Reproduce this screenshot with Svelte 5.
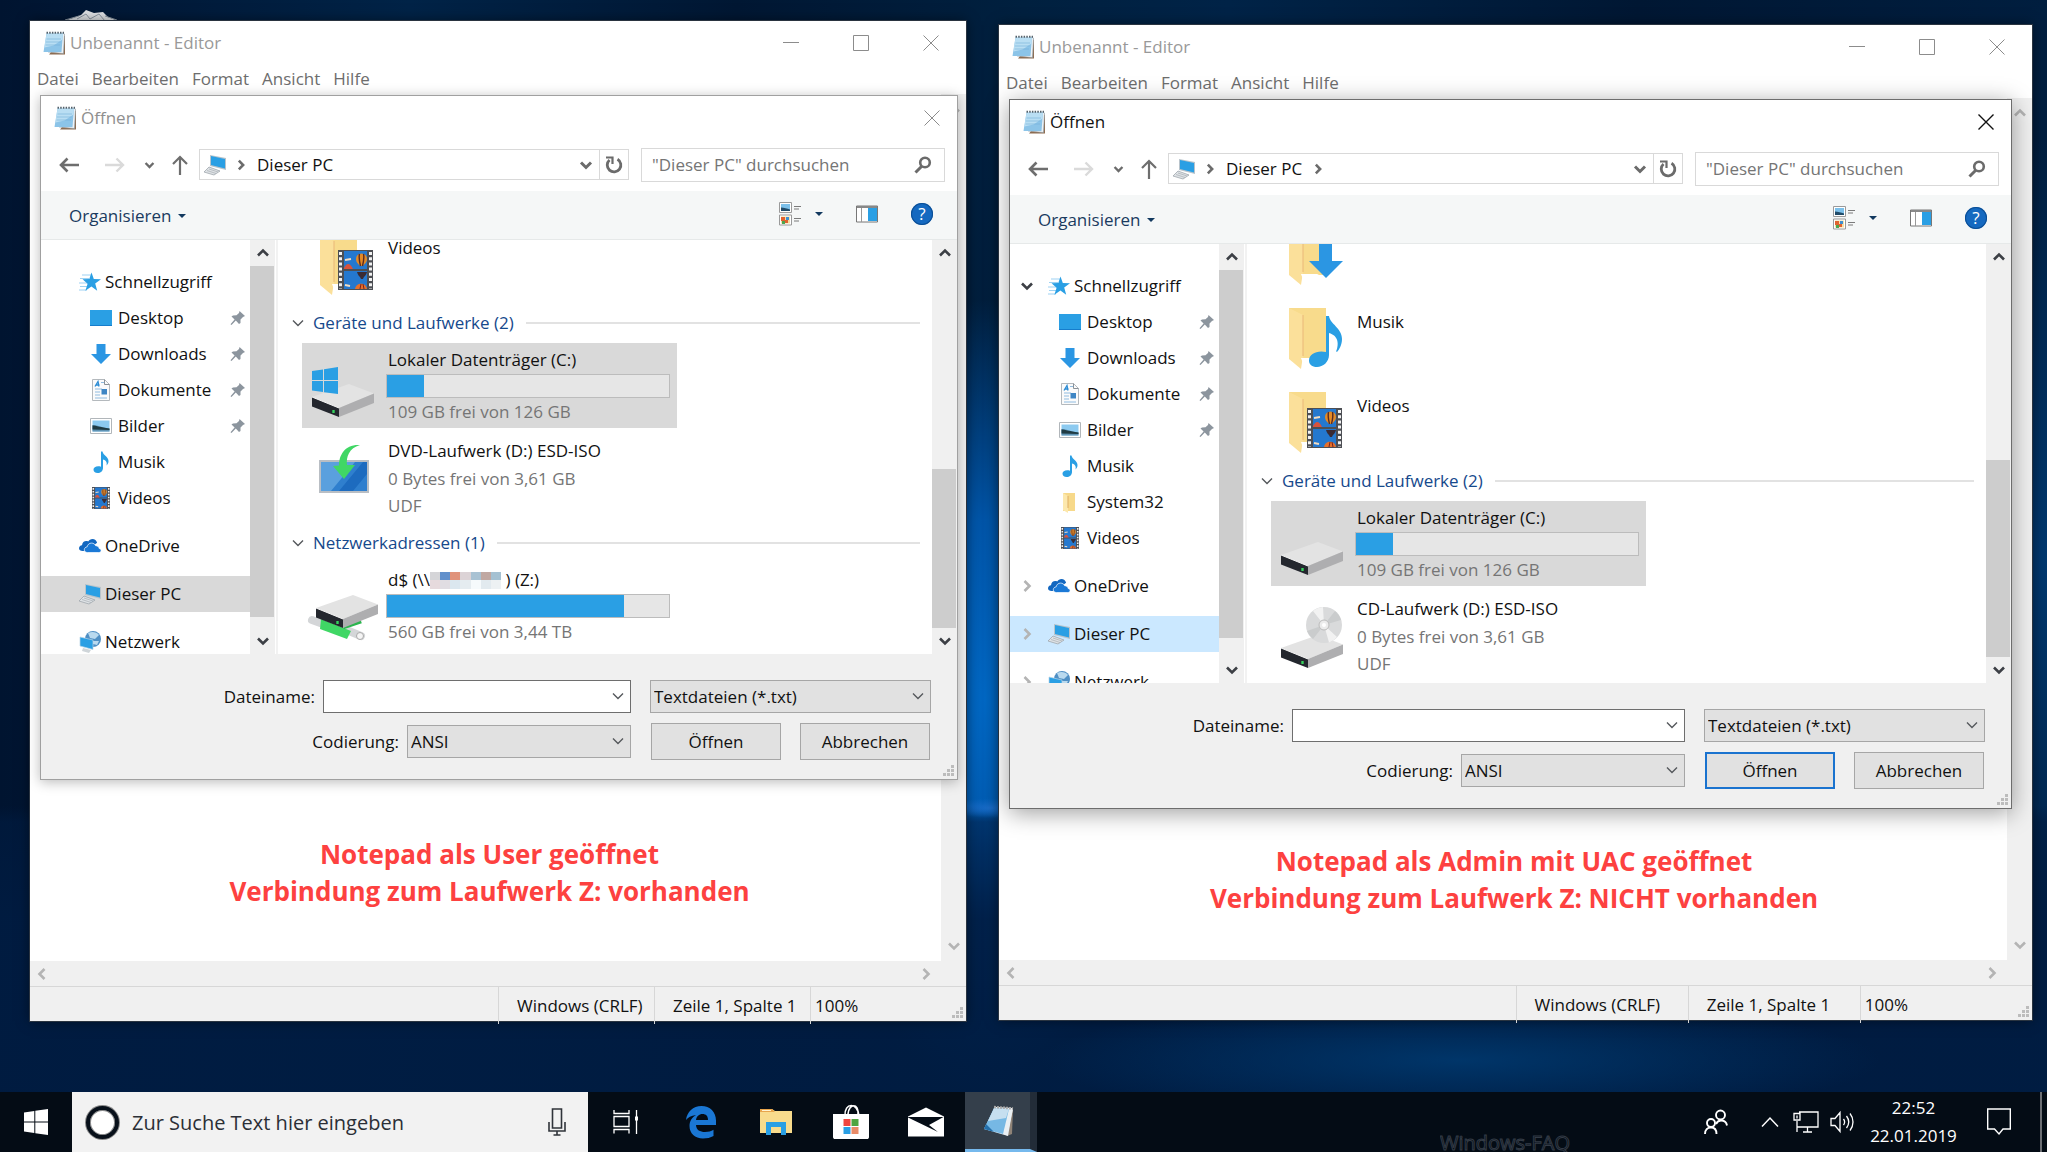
<script lang="ts">
	type NavItem = { label: string; icon: string; child?: boolean; pinned?: boolean; open?: boolean; selected?: boolean };
	type Tile = { label: string; icon: string; used?: number; lines?: string[]; selected?: boolean; masked?: boolean };
	type Group = { title?: string; kind: string; tiles: Tile[] };
	type Editor = {
		id: string;
		active: boolean;
		nav: NavItem[];
		groups: Group[];
		navThumb: number;
		listThumb: number;
		note: string[];
	};

	const pinnedItems: NavItem[] = [
		{ label: 'Schnellzugriff', icon: 'star', open: true },
		{ label: 'Desktop', icon: 'desktop', child: true, pinned: true },
		{ label: 'Downloads', icon: 'download', child: true, pinned: true },
		{ label: 'Dokumente', icon: 'document', child: true, pinned: true },
		{ label: 'Bilder', icon: 'picture', child: true, pinned: true },
		{ label: 'Musik', icon: 'music', child: true }
	];

	const rootItems: NavItem[] = [
		{ label: 'Videos', icon: 'video', child: true },
		{ label: 'OneDrive', icon: 'cloud' },
		{ label: 'Dieser PC', icon: 'pc', selected: true },
		{ label: 'Netzwerk', icon: 'network' }
	];

	const editors: Editor[] = [
		{
			id: 'user',
			active: false,
			nav: [...pinnedItems, ...rootItems],
			groups: [
				{ kind: 'folders', tiles: [{ label: 'Videos', icon: 'folder-video' }] },
				{
					title: 'Geräte und Laufwerke (2)',
					kind: 'drives',
					tiles: [
						{ label: 'Lokaler Datenträger (C:)', icon: 'drive-windows', used: 13, lines: ['109 GB frei von 126 GB'], selected: true },
						{ label: 'DVD-Laufwerk (D:) ESD-ISO', icon: 'dvd', lines: ['0 Bytes frei von 3,61 GB', 'UDF'] }
					]
				},
				{
					title: 'Netzwerkadressen (1)',
					kind: 'drives',
					tiles: [{ label: 'd$ (\\\\', icon: 'drive-network', used: 84, lines: ['560 GB frei von 3,44 TB'], masked: true }]
				}
			],
			navThumb: 97,
			listThumb: 44,
			note: ['Notepad als User geöffnet', 'Verbindung zum Laufwerk Z: vorhanden']
		},
		{
			id: 'admin',
			active: true,
			nav: [...pinnedItems, { label: 'System32', icon: 'folder', child: true }, ...rootItems],
			groups: [
				{
					kind: 'folders',
					tiles: [
						{ label: '', icon: 'folder-download' },
						{ label: 'Musik', icon: 'folder-music' },
						{ label: 'Videos', icon: 'folder-video' }
					]
				},
				{
					title: 'Geräte und Laufwerke (2)',
					kind: 'drives',
					tiles: [
						{ label: 'Lokaler Datenträger (C:)', icon: 'drive', used: 13, lines: ['109 GB frei von 126 GB'], selected: true },
						{ label: 'CD-Laufwerk (D:) ESD-ISO', icon: 'cd', lines: ['0 Bytes frei von 3,61 GB', 'UDF'] }
					]
				}
			],
			navThumb: 95,
			listThumb: 51,
			note: ['Notepad als Admin mit UAC geöffnet', 'Verbindung zum Laufwerk Z: NICHT vorhanden']
		}
	];

	const menus = ['Datei', 'Bearbeiten', 'Format', 'Ansicht', 'Hilfe'];
	const mosaic = [
		'#d5d5d8', '#6290cb', '#e0937b', '#dcd3d6', '#a9c2d3', '#c0a8a2', '#a5c1d2',
		'#e6dadd', '#e0dde2', '#dbe7ef', '#e5ecf0', '#f6fafc', '#e2eaef', '#edf1f3'
	];

	let search = $state('');
	let fileName = $state<Record<string, string>>({ user: '', admin: '' });
</script>

{#snippet chevron(dir: string, kind = 'bold')}
	<svg class="chevron {dir} {kind}" viewBox="0 0 14 14" aria-hidden="true"><path d="M2 4.500l5 5 5-5" /></svg>
{/snippet}

{#snippet notepad()}
	<svg class="notepad" viewBox="0 0 24 24" aria-hidden="true">
		<path d="M7 23.500h16V4z" fill="#8d6b4f" />
		<path d="M6 21l15.500 1.500 1-19.500L20 2z" fill="#eef2f5" stroke="#8c9aa5" stroke-width=".6" />
		<path d="M4.500 2.500H21l-1.500 18.500H1.500z" fill="#8cc4e8" />
		<path d="M4.500 2.500H21l-.5 6-9 6-9 2z" fill="#b9def3" />
		<path d="M4.500 1.800h17.500" stroke="#53616b" stroke-width="2" stroke-dasharray="1.500 1.200" />
		<path d="M4.500 8h14.500M4 11h14.500M3.500 14h14.500" stroke="#74b0d8" stroke-width=".6" />
	</svg>
{/snippet}

{#snippet film()}
	<path d="M0 0h35v40H0z" fill="#4d4f54" />
	<path d="M2.500 2v37M32.500 2v37" stroke="#f1f1f1" stroke-width="3" stroke-dasharray="3 2.200" />
	<path d="M6 1h23v18H6zM6 21h23v18H6z" fill="#2478cf" />
	<path d="M6 18c3-6 6-5 9 1H6z" fill="#d9533c" />
	<path d="M7 10l6-1M7 35l5 1" stroke="#f3dcc0" stroke-width="2" />
	<path d="M18 9a5.500 5.500 0 0111 0c0 4-3 5-4 7h-3c-1-2-4-3-4-7z" fill="#e38a26" />
	<path d="M21.500 4c-1 4 0 8 1 12M25.500 4c1 4 0 8-1 12" stroke="#5a2a20" stroke-width="1.400" fill="none" />
	<path d="M19 22h10c-1 4-3 4-4 7h-2c-1-3-3-3-4-7z" fill="#3a2b34" />
	<path d="M17 39c1-7 11-7 12 0z" fill="#e5702b" />
	<path d="M22 39l1-5M26 39l-1-5" stroke="#722" />
{/snippet}

{#snippet driveBox()}
	<path d="M1 13L38 0l25 9.500L28 24z" fill="#e3e3e3" />
	<path d="M28 24l35-14.500V19L28 33z" fill="#aeaeb0" />
	<path d="M1 13l27 11v9L1 22.500z" fill="#24272e" />
	<path d="M1 13l27 11" stroke="#f4f4f4" />
	<path d="M22.500 26v3" stroke="#36d25c" stroke-width="2.400" />
{/snippet}

{#snippet pcIcon()}
	<path d="M7 2l16 3v12L7 13z" fill="#b8c3cb" />
	<path d="M8 3l14 3v9.500L8 12z" fill="#2a9fe4" />
	<path d="M6 14l11 4-6 4-10-3z" fill="#dfe3e6" stroke="#9fa7ad" stroke-width=".8" />
	<path d="M4 17.500l9 3M6 16l9 3" stroke="#a8aeb3" stroke-width=".7" />
{/snippet}

{#snippet smallIcon(name: string)}
	<svg class="small-icon" viewBox="0 0 24 24" aria-hidden="true">
		{#if name === 'star'}
			<path d="M4 5h9M2 8.500h9M1 13h9M2 16.500h8M1 20h8" stroke="#9dd2f3" stroke-width="1.200" />
			<path d="M13.500 2.500l2.300 6.500 7.200.2-5.800 4.300 2 7.200-5.800-4.100-6 4.100 2.200-7L4.500 9.300l6.800-.2z" fill="#2a9fe4" />
		{:else if name === 'desktop'}
			<path d="M1 4h22v16H1z" fill="#2a9fe4" />
			<path d="M1 19.500h22" stroke="#167dcc" />
		{:else if name === 'download'}
			<path d="M7.500 2h9v10H22L12 22 2 12h5.500z" fill="#2b96e3" />
		{:else if name === 'document'}
			<path d="M3.500 1.500h12l5 5v16h-17z" fill="#fbfbfb" stroke="#b4b9bd" />
			<path d="M15.500 1.500v5h5" fill="none" stroke="#8b9298" />
			<path d="M6 8.500l3-5 1 5M6.500 7h4" stroke="#2a8bd4" fill="none" stroke-width="1.300" />
			<path d="M6 11h7M6 14h5M6 17h5M6 20h12M12 4.500h3" stroke="#8fbbe0" />
			<path d="M12.500 11h5.500v5.500h-5.500z" fill="#3f86c4" />
		{:else if name === 'picture'}
			<path d="M1.500 4.500h21v15h-21z" fill="#fff" stroke="#b1b6ba" />
			<path d="M3.500 6.500h17v11h-17z" fill="#8ccaf0" />
			<path d="M3.500 11c6 0 10 3 17 3.500v3h-17z" fill="#5f93b4" />
			<path d="M3.500 11.500c4 0 8 2 17 3v1.500l-17-.5z" fill="#1f3b43" />
		{:else if name === 'music'}
			<path d="M12 1.500h1.500c.5 4 6 5 6 9.500 0 2-.7 3.300-2 4.500 1-4-1.500-5.500-3.500-6v8.500c0 3-2.500 5-5.300 5-2.700 0-4.200-1.500-4.200-3.500C4.500 17 8 15.500 12 16.700z" fill="#2a9fe4" />
		{:else if name === 'video'}
			<svg x="3" y="1" width="18" height="22" viewBox="0 0 35 40" preserveAspectRatio="none">{@render film()}</svg>
		{:else if name === 'folder'}
			<path d="M5 3h12v18H5z" fill="#f7d98a" />
			<path d="M5 3l5 3v17l-5-3z" fill="#fce8ad" />
			<path d="M10 6v12" stroke="#dfae63" />
		{:else if name === 'cloud'}
			<path d="M4.500 17C2.500 17 1 16 1 14.200c0-1.600 1.200-2.800 3-3C4.300 8.500 6 7 8.300 7c.7 0 1.300.1 1.900.4C11.200 6 12.600 5 14.500 5c2.300 0 4 1.400 4.600 3.700L8 17z" fill="#1267c0" />
			<path d="M9.500 18.500c-2 0-3.200-1-3.200-2.700 0-1.600 1.200-2.800 2.900-3 .4-2.300 2.100-3.700 4.300-3.700 1.900 0 3.400 1 4.100 2.600 2.100 0 3.400 1.200 3.500 2.800 1.300.2 2 1 2 2 0 1.200-.9 2-2.300 2z" fill="#1b79d6" stroke="#fff" stroke-width=".7" />
		{:else if name === 'pc'}
			{@render pcIcon()}
		{:else if name === 'network'}
			<circle cx="15" cy="9" r="8" fill="#4f8fc4" />
			<path d="M10 3c4-2 9-1 11 2l-4 4-5-1zM15 11l6 0-2 4-4-1z" fill="#b9d9ee" />
			<path d="M2 7l13 3v9.500L2 16z" fill="#2a9fe4" stroke="#b8d4e6" stroke-width=".7" />
			<path d="M5 18l8 2-2 3-7-2z" fill="#cfd5d9" />
		{/if}
	</svg>
{/snippet}

{#snippet tileIcon(name: string)}
	{#if name.startsWith('folder')}
		<svg class="folder-icon" viewBox="0 0 54 62" aria-hidden="true">
			<path d="M0 0h37v51H12z" fill="#f8db8c" />
			<path d="M0 0l14 7v41l-2 13-12-10z" fill="#fbe09a" />
			<path d="M14 7v41" stroke="#e9b878" />
			<path d="M12 50h18l-15 8z" fill="#fff" />
			{#if name === 'folder-video'}
				<g transform="translate(18 16)">{@render film()}</g>
			{:else if name === 'folder-music'}
				<path d="M37 8h3c1 8 13 12 13 23 0 6-3 11-5 13-1 0-1-1 0-3 3-11-4-15-8-16v22c0 7-6 12-12 12-5 0-8-2.500-8-6.500 0-6.500 8-10.500 17-8.500z" fill="#2a9fe4" />
			{:else if name === 'folder-download'}
				<path d="M30 14h13v23h11L37 54 20 37h10z" fill="#2b96e3" />
			{/if}
		</svg>
	{:else}
		<svg class="drive-icon" viewBox="0 0 68 60" aria-hidden="true">
			{#if name === 'drive-windows'}
				<g transform="translate(0 20)">{@render driveBox()}</g>
				<path d="M1 7l11-1.500V16H1zM13 5.300L27 3v13H13zM1 17h11v11L1 26.500zM13 17h14v13l-14-1.800z" fill="#2a9fe4" />
			{:else if name === 'drive'}
				<g transform="translate(0 20)">{@render driveBox()}</g>
			{:else if name === 'cd'}
				<g transform="translate(0 22)">{@render driveBox()}</g>
				<circle cx="44" cy="12" r="18" fill="#d9dadb" />
				<path d="M44 12L33-2a18 18 0 0110-4zM44 12l13 12a18 18 0 01-8 5.500z" fill="#f2f2f2" />
				<path d="M44 12L27 18a18 18 0 006 8zM44 12l17-5a18 18 0 00-6-9z" fill="#cacccd" />
				<circle cx="44" cy="12" r="5" fill="#ececec" stroke="#bbb" />
				<circle cx="44" cy="12" r="2" fill="#fff" />
			{:else if name === 'dvd'}
				<path d="M8 5h50v33H8z" fill="#b9bec4" />
				<path d="M10 7h46v29H10z" fill="#2f7fce" />
				<path d="M10 7h34L20 36H10z" fill="#5aa0de" />
				<path d="M28 36L52 7h4v12L42 36z" fill="#1d6bbf" />
				<path d="M49-10C38-7 35 2 36 10h8L33 24 22 11l6-.5C28 0 34-11 49-10z" fill="#40d765" />
			{:else if name === 'drive-network'}
				<path d="M1 36l11 4M38 47l12 5" stroke="#d4d6d8" stroke-width="8" stroke-linecap="round" />
				<path d="M10 35l30 12-4 8-27-10z" fill="#40d765" />
				<path d="M32 43l18-6" stroke="#2bb54e" stroke-width="5" />
				<circle cx="49" cy="52" r="3.500" fill="#f5f5f5" stroke="#aaa" />
				<g transform="translate(4 11)">{@render driveBox()}</g>
			{/if}
		</svg>
	{/if}
{/snippet}

{#snippet scrollbar(size: number, atEnd: boolean)}
	<div class="scrollbar">
		<span class="scroll-step">{@render chevron('up')}</span>
		<div class="track" class:at-end={atEnd}>
			<div class="thumb" style="height: {size}%"></div>
		</div>
		<span class="scroll-step">{@render chevron('down')}</span>
	</div>
{/snippet}

{#snippet grip()}
	<svg class="grip" viewBox="0 0 12 12" aria-hidden="true">
		<path d="M8 0h3v3H8zM4 4h3v3H4zM8 4h3v3H8zM0 8h3v3H0zM4 8h3v3H4zM8 8h3v3H8z" fill="#bcbcbc" />
	</svg>
{/snippet}

{#snippet closeGlyph()}
	<svg class="caption-glyph" viewBox="0 0 16 16" aria-hidden="true"><path d="M.5.5l15 15M15.500.5l-15 15" /></svg>
{/snippet}

{#snippet openDialog(editor: Editor)}
	<section class="dialog" class:active={editor.active} aria-label="Öffnen">
		<header class="dialog-title">
			{@render notepad()}
			<h2>Öffnen</h2>
			<button class="caption-button" type="button" aria-label="Schließen">{@render closeGlyph()}</button>
		</header>

		<div class="address-row">
			<button class="step" type="button" aria-label="Zurück">
				<svg viewBox="0 0 20 16" aria-hidden="true"><path d="M8.500 1.500L2 8l6.500 6.500M2 8h18" stroke="#6e6e6e" stroke-width="2.600" fill="none" /></svg>
			</button>
			<button class="step" type="button" aria-label="Vorwärts" disabled>
				<svg viewBox="0 0 20 16" aria-hidden="true"><path d="M11.500 1.500L18 8l-6.500 6.500M18 8H0" stroke="#dadada" stroke-width="2.400" fill="none" /></svg>
			</button>
			<button class="step recent" type="button" aria-label="Zuletzt besuchte Orte">{@render chevron('down', 'gray tiny')}</button>
			<button class="step up-level" type="button" aria-label="Nach oben">
				<svg viewBox="0 0 16 20" aria-hidden="true"><path d="M1 9l7-7 7 7M8 2v18" stroke="#6e6e6e" stroke-width="2.200" fill="none" /></svg>
			</button>
			<div class="address">
				<svg class="small-icon" viewBox="0 0 24 24" aria-hidden="true">{@render pcIcon()}</svg>
				{@render chevron('right', 'gray small')}
				<a href="#pc">Dieser PC</a>
				{#if editor.active}{@render chevron('right', 'gray small')}{/if}
				<button class="history" type="button" aria-label="Vorherige Orte">{@render chevron('down', 'gray')}</button>
				<button class="refresh" type="button" aria-label="Aktualisieren">
					<svg viewBox="0 0 18 18" aria-hidden="true">
						<path d="M12.500 3.200A6.800 6.800 0 1 1 4.500 4" fill="none" stroke="#6b6b6b" stroke-width="2.800" />
						<path d="M1 1.500h6.500v6.500" fill="none" stroke="#6b6b6b" stroke-width="2.200" />
					</svg>
				</button>
			</div>
			<div class="search">
				<input type="search" bind:value={search} placeholder={'"Dieser PC" durchsuchen'} aria-label="Dieser PC durchsuchen" />
				<svg viewBox="0 0 18 18" aria-hidden="true">
					<circle cx="11" cy="6.500" r="4.800" fill="none" stroke="#6b6b6b" stroke-width="2.600" />
					<path d="M7.500 10.500L1.500 16.500" stroke="#6b6b6b" stroke-width="3" />
				</svg>
			</div>
		</div>

		<div class="toolbar">
			<button class="organize" type="button">Organisieren <i class="caret"></i></button>
			<button class="view-mode" type="button" aria-label="Ansicht ändern">
				<svg viewBox="0 0 22 24" aria-hidden="true">
					<path d="M.5.500h12v10H.5zM.5 13h12v10H.5z" fill="#fff" stroke="#9a9a9a" />
					<path d="M2 2h9v7H2z" fill="#7cc0ea" />
					<path d="M2 5.500c3 0 6 1 9 2V9H2z" fill="#214b68" />
					<path d="M2 14.500h9v7H2z" fill="#f4dfa5" />
					<path d="M2 15h4v4H2zM5 18h4v3H5z" fill="#e0622f" />
					<path d="M7 15h3v3H7z" fill="#3d8fd1" />
					<path d="M3 19h3v3H3z" fill="#4ca54e" />
					<path d="M15 4.500h7M15 7h5M15 16.500h7M15 19h5" stroke="#7b7b7b" />
				</svg>
				<i class="caret"></i>
			</button>
			<button type="button" aria-label="Vorschaufenster">
				<svg viewBox="0 0 22 18" aria-hidden="true">
					<path d="M.5 1h21v16H.5z" fill="#fff" stroke="#777" />
					<path d="M5.500 1v16" stroke="#999" />
					<path d="M12 3h9v13h-9z" fill="#2a9fe4" />
					<path d="M1 2h20" stroke="#888" stroke-width="2" />
				</svg>
			</button>
			<button class="help" type="button" aria-label="Hilfe">?</button>
		</div>

		<div class="panes">
			<nav class="tree" aria-label="Ordner">
				{#each editor.nav as item}
					<a href="#{item.label}" class="node" class:child={item.child} class:selected={item.selected}>
						<span class="expander">
							{#if editor.active && !item.child}
								{@render chevron(item.open ? 'down' : 'right', item.open ? '' : 'light')}
							{/if}
						</span>
						{@render smallIcon(item.icon)}
						<span>{item.label}</span>
						{#if item.pinned}
							<svg class="pin" viewBox="0 0 16 16" aria-hidden="true">
								<path d="M9.500 1l5.500 5-2 1-2.500 2.500L10.500 13 9 14 5.800 10.600 1.500 15l-1-.8L4.600 9.400 1.500 6.500 3 5.500l3.500-.3L9 3z" fill="#8c959e" />
							</svg>
						{/if}
					</a>
				{/each}
			</nav>
			{@render scrollbar(editor.navThumb, false)}
			<div class="splitter"></div>
			<div class="files">
				{#each editor.groups as group}
					{#if group.title}
						<h3>{@render chevron('down', 'thin')}<span>{group.title}</span></h3>
					{/if}
					<ul class={group.kind}>
						{#each group.tiles as tile}
							<li class="tile" class:selected={tile.selected}>
								<div class="tile-icon">{@render tileIcon(tile.icon)}</div>
								<div class="tile-text">
									<strong>
										{tile.label}{#if tile.masked}<span class="mosaic">{#each mosaic as color}<i style="background: {color}"></i>{/each}</span>{' ) (Z:)'}{/if}
									</strong>
									{#if tile.used}
										<div class="capacity"><div style="width: {tile.used}%"></div></div>
									{/if}
									{#each tile.lines ?? [] as line}
										<span>{line}</span>
									{/each}
								</div>
							</li>
						{/each}
					</ul>
				{/each}
			</div>
			{@render scrollbar(editor.listThumb, true)}
		</div>

		<form class="footer" onsubmit={(e) => e.preventDefault()}>
			<div class="fields">
				<div class="field name">
					<label for="{editor.id}-name">Dateiname:</label>
					<div class="box">
						<input id="{editor.id}-name" type="text" bind:value={fileName[editor.id]} />
						{@render chevron('down', 'thin')}
					</div>
				</div>
				<div class="field">
					<label for="{editor.id}-encoding">Codierung:</label>
					<div class="box encoding">
						<select id="{editor.id}-encoding"><option>ANSI</option><option>Unicode</option><option>UTF-8</option></select>
						{@render chevron('down', 'thin')}
					</div>
				</div>
			</div>
			<div class="actions">
				<div class="box">
					<select aria-label="Dateityp"><option>Textdateien (*.txt)</option><option>Alle Dateien</option></select>
					{@render chevron('down', 'thin')}
				</div>
				<div class="buttons">
					<button type="submit" class="primary">Öffnen</button>
					<button type="button">Abbrechen</button>
				</div>
			</div>
			{@render grip()}
		</form>
	</section>
{/snippet}

<div class="screen">
	<main class="desktop">
		<svg class="bin" viewBox="0 0 52 30" aria-hidden="true">
			<path d="M0 11L52 11 46 30H6z" fill="#8493a3" />
			<path d="M2 10l14-5 5-5 8 3 9-1 5 5 8 3v6H2z" fill="#dfe2e5" />
			<path d="M12 9l9-5 4 5 9-5 6 7M0 10l14-4M52 10l-12-4" stroke="#8d98a3" fill="none" />
		</svg>

		{#each editors as editor}
			<article class="window {editor.id}">
				<header class="window-title">
					{@render notepad()}
					<h1>Unbenannt - Editor</h1>
					<div class="captions">
						<button class="caption-button" type="button" aria-label="Minimieren">
							<svg class="caption-glyph" viewBox="0 0 16 16" aria-hidden="true"><path d="M0 7.500h16" /></svg>
						</button>
						<button class="caption-button" type="button" aria-label="Maximieren">
							<svg class="caption-glyph" viewBox="0 0 16 16" aria-hidden="true"><path d="M.5.5h15v15H.5z" /></svg>
						</button>
						<button class="caption-button" type="button" aria-label="Schließen">{@render closeGlyph()}</button>
					</div>
				</header>
				<nav class="menu" aria-label="Menü">
					{#each menus as menu}
						<button type="button">{menu}</button>
					{/each}
				</nav>
				<div class="editor">
					<div class="paper">
						{#each editor.note as line}
							<p>{line}</p>
						{/each}
					</div>
					<div class="edge vertical">{@render chevron('up', 'light')}{@render chevron('down', 'light')}</div>
					<div class="edge horizontal">{@render chevron('left', 'light')}{@render chevron('right', 'light')}</div>
					{@render openDialog(editor)}
				</div>
				<footer class="status">
					<span></span>
					<span>Windows (CRLF)</span>
					<span>Zeile 1, Spalte 1</span>
					<span>100%</span>
					{@render grip()}
				</footer>
			</article>
		{/each}
	</main>

	<footer class="taskbar">
		<button class="start" type="button" aria-label="Start">
			<svg viewBox="0 0 24 28" aria-hidden="true">
				<path d="M0 4.500L10.300 3v10.500H0zM11.300 2.800L24 1v12.500H11.300zM0 14.500h10.300V25L0 23.500zM11.300 14.500H24V27l-12.700-1.800z" fill="#fff" />
			</svg>
		</button>
		<div class="cortana">
			<i class="ring"></i>
			<input type="text" placeholder="Zur Suche Text hier eingeben" aria-label="Suche" />
			<svg viewBox="0 0 18 28" aria-hidden="true">
				<path d="M4.500 1h9v19h-9zM1 14v9h16v-9M9 23v4M5.500 27h7" fill="none" stroke="#30343a" stroke-width="1.600" />
			</svg>
		</div>
		<div class="apps">
			<button type="button" aria-label="Taskansicht">
				<svg viewBox="0 0 26 24" width="26" height="24" aria-hidden="true">
					<path d="M1 0v3.500h15V0M1 6.500h15v10H1zM1 23.500V19.500h15v4M23.500 0v24" fill="none" stroke="#fff" stroke-width="1.300" />
					<path d="M22 6.500h3v4h-3z" fill="#fff" />
				</svg>
			</button>
			<button type="button" aria-label="Microsoft Edge">
				<svg viewBox="0 0 32 34" width="32" height="34" aria-hidden="true">
					<path d="M1 15C2 7 8 1 16.500 1 25 1 31 7 31 15.500V20H11c.3 5 4 7 9 7 3.500 0 6-.8 8.500-2.200V31c-3 1.700-6.500 2.500-10.500 2.500-8 0-13.500-5-13.500-12.500 0-5 2.500-8.700 6.500-11C6 10.500 3 12.500 1 15zM11 15h12c0-4-2-6-5.500-6S11.500 11.500 11 15z" fill="#1a77d4" />
				</svg>
			</button>
			<button type="button" aria-label="Explorer">
				<svg viewBox="0 0 32 28" width="32" height="28" aria-hidden="true">
					<path d="M0 1h12l3 2h17v22H0z" fill="#f8db8c" />
					<path d="M0 1h12l3 3H0z" fill="#e8a54c" />
					<path d="M2 2.500h9" stroke="#fff3d0" />
					<path d="M6 14h20v13h-5v-8H11v8H6z" fill="#2a9fe4" />
				</svg>
			</button>
			<button type="button" aria-label="Microsoft Store">
				<svg viewBox="0 0 36 36" width="36" height="36" aria-hidden="true">
					<path d="M12 12c-1-14 13-14 14 0M15 10c1-11 11-11 10 0" fill="none" stroke="#fff" stroke-width="1.600" />
					<path d="M0 10h36v23c0 1.500-1 2-2 2H2c-1 0-2-.5-2-2z" fill="#fff" />
					<path d="M10.500 15h7v7h-7z" fill="#f0463f" />
					<path d="M18.500 15h7v7h-7z" fill="#4ea541" />
					<path d="M10.500 23h7v7h-7z" fill="#2a9fe4" />
					<path d="M18.500 23h7v7h-7z" fill="#e98b68" />
				</svg>
			</button>
			<button type="button" aria-label="Mail">
				<svg viewBox="0 0 36 30" width="36" height="30" aria-hidden="true">
					<path d="M0 9.500L18 .500l18 9v20H0z" fill="#fff" />
					<path d="M0 10h35.500L21 18l9 7L0 10.500z" fill="#040c16" />
				</svg>
			</button>
			<button class="running" type="button" aria-label="Editor">
				<svg viewBox="0 0 34 34" width="34" height="34" aria-hidden="true">
					<path d="M14 3l18 2-1 25-5 2z" fill="#8f8377" />
					<path d="M14 3l18 2-6 27z" fill="#d5dade" />
					<path d="M14 3l18 1-5 28L3 25z" fill="#e9eff3" />
					<path d="M13 4l15 1-6 25L3 25z" fill="#76b8e4" />
					<path d="M13 4l15 1-3 9-18 3z" fill="#c6dff0" />
					<path d="M5 20l8 8-10-3z" fill="#2470ab" />
					<path d="M13 3l19 1.500" stroke="#a9a9a9" stroke-width="2.500" stroke-dasharray="2 1" />
				</svg>
			</button>
		</div>
		<span class="brand">Windows-FAQ</span>
		<div class="tray">
			<button class="people" type="button" aria-label="Kontakte">
				<svg viewBox="0 0 24 26" width="24" height="26" aria-hidden="true">
					<path d="M1 25c0-4 2.500-6.500 6-6.500s5.500 2.500 5.500 6.500M12 15c1-2 2.500-3.500 5-3.500 3.500 0 5.500 2 6 5" fill="none" stroke="#fff" stroke-width="1.900" />
					<circle cx="7" cy="14" r="4" fill="none" stroke="#fff" stroke-width="1.900" />
					<circle cx="16.500" cy="6" r="4.500" fill="none" stroke="#fff" stroke-width="1.900" />
				</svg>
			</button>
			<button class="more" type="button" aria-label="Ausgeblendete Symbole">
				<svg viewBox="0 0 18 12" width="18" height="12" aria-hidden="true"><path d="M1 10.500l8-8.500 8 8.500" fill="none" stroke="#fff" stroke-width="1.500" /></svg>
			</button>
			<button type="button" aria-label="Netzwerk">
				<svg viewBox="0 0 26 22" width="26" height="22" aria-hidden="true">
					<path d="M6 1h19v15H4V10M4 16v5M10 21h9M14.500 16v5M1 2.500h6v6.500H1zM4 4.500v3" fill="none" stroke="#fff" stroke-width="1.300" />
				</svg>
			</button>
			<button type="button" aria-label="Lautstärke">
				<svg viewBox="0 0 24 22" width="24" height="22" aria-hidden="true">
					<path d="M1 7.500h4l5-6v19l-5-6H1zM13.500 8c1.500 2 1.500 4 0 6M16.500 5c3 4 3 8 0 12M20 2.500c4 5 4 12 0 17" fill="none" stroke="#fff" stroke-width="1.300" />
				</svg>
			</button>
			<time datetime="2019-01-22T22:52"><span>22:52</span><span>22.01.2019</span></time>
			<button class="messages" type="button" aria-label="Info-Center">
				<svg viewBox="0 0 24 28" width="24" height="28" aria-hidden="true"><path d="M.7 1h22.600v20H16l-4 5-4.500-5H.7z" fill="none" stroke="#fff" stroke-width="1.400" /></svg>
			</button>
		</div>
	</footer>
</div>

<style>
	:global(body) {
		background: #001a36;
	}

	.screen {
		display: flex;
		flex-direction: column;
		min-height: 100vh;
		font-family: 'Open Sans', 'Noto Sans', sans-serif;
		font-size: 17px;
		line-height: 24px;
		color: #111;
		background:
			radial-gradient(ellipse 40px 10px at 990px 808px, #1a6cc8 0%, transparent 100%),
			radial-gradient(ellipse 420px 60px at 1460px 1060px, rgba(0, 64, 122, 0.7) 0%, transparent 100%),
			linear-gradient(to bottom, transparent 0 806px, rgba(0, 28, 66, 0.6) 822px, rgba(0, 28, 66, 0.9) 920px 100%),
			radial-gradient(ellipse 160px 400px at 985px 700px, #0068c4 0%, #0055a8 45%, transparent 100%),
			radial-gradient(ellipse 300px 420px at 2047px 560px, #00386f 0%, transparent 100%),
			linear-gradient(to right, #001430 0%, #002347 20%, #001733 36%, #00203f 50%, #002347 60%, #001733 80%, #001e3f 100%);
	}

	* {
		box-sizing: border-box;
	}

	button,
	input,
	select {
		font: inherit;
		color: inherit;
	}

	button {
		display: flex;
		align-items: center;
		justify-content: center;
		padding: 0;
		border: 0;
		background: none;
	}

	h1,
	h2,
	h3,
	p,
	ul {
		margin: 0;
		padding: 0;
		font: inherit;
		list-style: none;
	}

	a {
		color: inherit;
		text-decoration: none;
	}

	svg {
		flex: none;
		overflow: visible;
	}

	.desktop {
		position: relative;
		display: grid;
		grid-template-columns: 936fr 1033fr;
		gap: 33px;
		flex: 1;
		padding: 21px 15px 71px 30px;
	}

	.bin {
		position: absolute;
		top: 10px;
		left: 65px;
		width: 52px;
	}

	.window {
		position: relative;
		display: flex;
		flex-direction: column;
		background: #fff;
		box-shadow: 0 0 0 1px #2a3440, 0 0 12px rgba(0, 0, 0, 0.5);
	}

	.window.admin {
		margin: 4px 0 1px;
	}

	.window-title {
		display: flex;
		align-items: center;
		height: 45px;
		padding: 0 0 2px 12px;
		gap: 4px;
		color: #999;
	}

	.notepad {
		width: 24px;
		height: 24px;
	}

	.captions {
		display: flex;
		margin-left: auto;
	}

	.caption-button {
		width: 70px;
		height: 44px;
	}

	.caption-glyph {
		width: 16px;
		height: 16px;
		fill: none;
		stroke: #8c8c8c;
	}

	.menu {
		display: flex;
		gap: 13px;
		height: 28px;
		padding: 0 0 2px 7px;
		color: #6d6d6d;
	}

	.editor {
		position: relative;
		display: grid;
		grid-template: 1fr 25px / 1fr 25px;
		flex: 1;
		background: #f0f0f0;
	}

	.paper {
		display: flex;
		flex-direction: column;
		justify-content: flex-end;
		padding: 0 0 51px 8px;
		background: #fff;
		color: #fd4140;
		font-size: 26px;
		font-weight: 700;
		line-height: 37px;
		text-align: center;
	}

	.admin .paper {
		padding: 0 0 43px 22px;
	}

	.edge {
		display: flex;
		justify-content: space-between;
		align-items: center;
		padding: 5px 8px 5px 5px;
	}

	.edge.vertical {
		flex-direction: column;
		padding: 8px 0;
	}

	.status {
		position: relative;
		display: grid;
		grid-template-columns: 3fr 1fr 1fr 1fr;
		height: 35px;
		border-top: 1px solid #d7d7d7;
		background: #f0f0f0;
		line-height: 37px;
	}

	.status span {
		padding-left: 18px;
		border-left: 1px solid #d7d7d7;
	}

	.status span:first-child {
		border: 0;
	}

	.status span:last-of-type {
		padding-left: 4px;
	}

	.grip {
		position: absolute;
		right: 2px;
		bottom: 2px;
		width: 12px;
		height: 12px;
	}

	.chevron {
		width: 14px;
		height: 14px;
		fill: none;
		stroke: #3c3f45;
		stroke-width: 2.6;
	}

	.chevron.up {
		transform: rotate(180deg);
	}

	.chevron.left {
		transform: rotate(90deg);
	}

	.chevron.right {
		transform: rotate(-90deg);
	}

	.chevron.gray {
		stroke: #6b6b6b;
		stroke-width: 3;
	}

	.chevron.small {
		width: 12px;
	}

	.chevron.tiny {
		width: 11px;
	}

	.chevron.light {
		stroke: #b4b4b4;
	}

	.chevron.thin {
		stroke: #55585c;
		stroke-width: 1.4;
	}

	/* open dialog, floats over the text area and its scrollbar */
	.dialog {
		position: absolute;
		top: 1px;
		left: 10px;
		right: 8px;
		border: 1px solid #a0a0a0;
		background: #fff;
		box-shadow: 0 2px 12px rgba(0, 0, 0, 0.28);
	}

	.dialog.active {
		right: 20px;
		border-color: #6d6d6d;
		box-shadow: 0 4px 22px rgba(0, 0, 0, 0.38);
	}

	.dialog-title {
		display: flex;
		align-items: center;
		height: 44px;
		padding-left: 12px;
		gap: 4px;
		color: #8f8f8f;
	}

	.dialog-title .caption-button {
		width: 50px;
		margin-left: auto;
	}

	.active .dialog-title {
		color: #111;
	}

	.active .dialog-title .caption-glyph {
		stroke: #111;
		stroke-width: 1.4;
	}

	.address-row {
		display: flex;
		align-items: center;
		height: 51px;
		padding: 0 12px 2px 5px;
	}

	.step {
		width: 46px;
		height: 30px;
	}

	.step svg:not(.chevron) {
		height: 16px;
	}

	.step.recent {
		width: 22px;
	}

	.step.up-level {
		width: 39px;
	}

	.step.up-level svg {
		height: 20px;
	}

	.address {
		display: flex;
		align-items: center;
		flex: 1;
		height: 31px;
		padding-left: 3px;
		gap: 8px;
		border: 1px solid #d9d9d9;
	}

	.address a {
		padding: 0 2px;
	}

	.small-icon {
		width: 24px;
		height: 24px;
	}

	.history {
		width: 26px;
		height: 29px;
		margin-left: auto;
		margin-right: -8px;
	}

	.refresh {
		width: 29px;
		height: 29px;
		border-left: 1px solid #d9d9d9;
	}

	.refresh svg {
		width: 18px;
	}

	.search {
		display: flex;
		align-items: center;
		width: 304px;
		height: 34px;
		margin-left: 12px;
		padding: 0 12px 0 10px;
		border: 1px solid #d9d9d9;
	}

	.search input {
		flex: 1;
		min-width: 0;
		padding: 0;
		border: 0;
		outline: 0;
	}

	.search input::placeholder {
		color: #757575;
	}

	.search svg {
		width: 18px;
	}

	.toolbar {
		display: flex;
		align-items: center;
		height: 49px;
		padding: 0 24px 3px 28px;
		gap: 33px;
		border-bottom: 1px solid #e6e9e9;
		background: #f5f7f7;
	}

	.organize {
		margin-right: auto;
		padding-top: 4px;
		gap: 7px;
		color: #1a3b5f;
	}

	.caret {
		border: 4px solid transparent;
		border-top-color: #12395f;
		border-bottom: 0;
	}

	.view-mode {
		gap: 14px;
	}

	.view-mode svg {
		width: 22px;
	}

	.toolbar button > svg {
		width: 22px;
	}

	.help {
		width: 22px;
		height: 22px;
		border-radius: 50%;
		background: #1569c0;
		box-shadow: inset 0 0 0 1px #0c4f96;
		color: #fff;
	}

	.panes {
		display: flex;
		height: 414px;
		overflow: hidden;
	}

	.active .panes {
		height: 439px;
	}

	.tree {
		width: 209px;
		padding-top: 24px;
		overflow: hidden;
	}

	.node {
		display: flex;
		align-items: center;
		height: 36px;
		gap: 3px;
	}

	.node.child {
		gap: 5px;
	}

	.node:not(.child):not(:first-child) {
		margin-top: 12px;
	}

	.expander {
		display: flex;
		justify-content: center;
		width: 34px;
	}

	.child .expander {
		width: 43px;
	}

	.node.selected {
		background: #d9d9d9;
	}

	.active .node.selected {
		background: #cbe8ff;
	}

	.pin {
		width: 16px;
		margin-left: auto;
		margin-right: 4px;
	}

	.scrollbar {
		display: flex;
		flex-direction: column;
		width: 25px;
		background: #f0f0f0;
	}

	.scroll-step {
		display: flex;
		align-items: center;
		justify-content: center;
		height: 26px;
	}

	.track {
		display: flex;
		flex-direction: column;
		flex: 1;
	}

	.track.at-end {
		justify-content: flex-end;
	}

	.thumb {
		width: 24px;
		background: #cdcdcd;
	}

	.splitter {
		width: 3px;
		border-right: 2px solid #f2f2f2;
	}

	.files {
		display: flex;
		flex: 1;
		flex-direction: column;
		justify-content: flex-end;
		padding: 0 12px 6px 13px;
	}

	.files h3 {
		display: flex;
		flex: none;
		align-items: center;
		height: 40px;
		margin-top: 4px;
		gap: 8px;
		color: #16498c;
	}

	.files h3::after {
		content: '';
		flex: 1;
		height: 2px;
		margin-left: 4px;
		background: #e2e2e2;
	}

	.files ul {
		flex: none;
		padding-left: 11px;
	}

	.tile {
		display: flex;
		width: 375px;
		height: 85px;
		padding-top: 3px;
	}

	.tile + .tile {
		margin-top: 6px;
	}

	.folders .tile {
		height: 68px;
	}

	.folders .tile + .tile {
		margin-top: 16px;
	}

	.tile.selected {
		background: #d9d9d9;
	}

	.tile-icon {
		width: 84px;
		padding: 18px 0 0 9px;
	}

	.folders .tile-icon {
		padding: 0 0 0 18px;
	}

	.drive-icon {
		width: 68px;
		height: 60px;
	}

	.folder-icon {
		width: 54px;
		height: 62px;
	}

	.tile-text {
		display: flex;
		flex: 1;
		flex-direction: column;
		padding-right: 7px;
		color: #757575;
	}

	.tile-text > strong {
		display: flex;
		align-items: center;
		padding-left: 2px;
		font-weight: 400;
		line-height: 28px;
		white-space: pre;
		color: #111;
	}

	.tile-text > span {
		padding-left: 2px;
		line-height: 27px;
	}

	.capacity {
		height: 24px;
		border: 1px solid #bcbcbc;
		background: #e6e6e6;
	}

	.capacity div {
		height: 100%;
		background: #2a9fe4;
	}

	.mosaic {
		display: grid;
		grid-template-columns: repeat(7, 1fr);
		width: 71px;
		height: 17px;
	}

	.footer {
		position: relative;
		display: flex;
		gap: 19px;
		height: 125px;
		padding: 26px 26px 0 0;
		background: #f0f0f0;
	}

	.fields {
		display: flex;
		flex: 1;
		flex-direction: column;
		gap: 12px;
	}

	.field {
		display: flex;
		align-items: center;
		justify-content: flex-end;
		gap: 8px;
	}

	.field.name label {
		width: 274px;
		text-align: right;
	}

	.field.name .box {
		flex: 1;
	}

	.box {
		position: relative;
		display: flex;
	}

	.box .chevron {
		position: absolute;
		top: 9px;
		right: 6px;
		pointer-events: none;
	}

	.box input,
	.box select {
		width: 100%;
		height: 33px;
		padding: 0 3px;
		border: 1px solid #6e6e6e;
		border-radius: 0;
		outline: 0;
		background: #fff;
		appearance: none;
	}

	.box select {
		border-color: #a6a6a6;
		background: #e1e1e1;
	}

	.encoding {
		width: 224px;
	}

	.actions {
		display: flex;
		flex-direction: column;
		gap: 10px;
		width: 281px;
	}

	.buttons {
		display: flex;
		justify-content: space-between;
		padding: 0 1px;
	}

	.buttons button {
		width: 130px;
		height: 37px;
		border: 1px solid #a6a6a6;
		background: #e1e1e1;
	}

	.active .buttons .primary {
		border: 2px solid #1a73cf;
	}

	.taskbar {
		display: flex;
		height: 60px;
		background: #040c15;
		color: #fff;
	}

	.start {
		width: 72px;
	}

	.start svg {
		width: 24px;
	}

	.cortana {
		display: flex;
		align-items: center;
		width: 516px;
		padding: 0 22px 0 14px;
		background: #f2f2f2;
		color: #2b2f36;
		font-size: 20px;
	}

	.ring {
		width: 33px;
		height: 33px;
		border: 4px solid #08101a;
		border-radius: 50%;
		box-shadow: inset 0 0 0 1px #8a8a8a, 0 0 0 1px #8a8a8a;
		background: #fff;
	}

	.cortana input {
		flex: 1;
		padding: 2px 0 0 13px;
		border: 0;
		outline: 0;
		background: none;
	}

	.cortana input::placeholder {
		color: #2b2f36;
	}

	.cortana svg {
		width: 18px;
	}

	.apps {
		display: flex;
		gap: 3px;
		padding-left: 2px;
	}

	.apps button {
		width: 72px;
	}

	.apps .running {
		border-right: 7px solid #222c38;
		border-bottom: 3px solid #76b9ed;
		background: #343f4b;
	}

	.brand {
		align-self: flex-end;
		margin: 0 0 -6px auto;
		height: 30px;
		font-size: 20px;
		line-height: 30px;
		color: transparent;
		overflow: hidden;
		-webkit-text-stroke: 1px #333b46;
	}

	.tray {
		display: flex;
		align-items: center;
		margin-left: 128px;
		border-right: 2px solid #6c6f74;
		margin-right: 5px;
	}

	.tray button {
		width: 36px;
		height: 60px;
	}

	.tray .people {
		margin-right: 18px;
	}

	.tray time {
		display: flex;
		flex-direction: column;
		width: 107px;
		line-height: 28px;
		text-align: center;
	}

	.tray .messages {
		width: 73px;
		padding-right: 10px;
	}
</style>
